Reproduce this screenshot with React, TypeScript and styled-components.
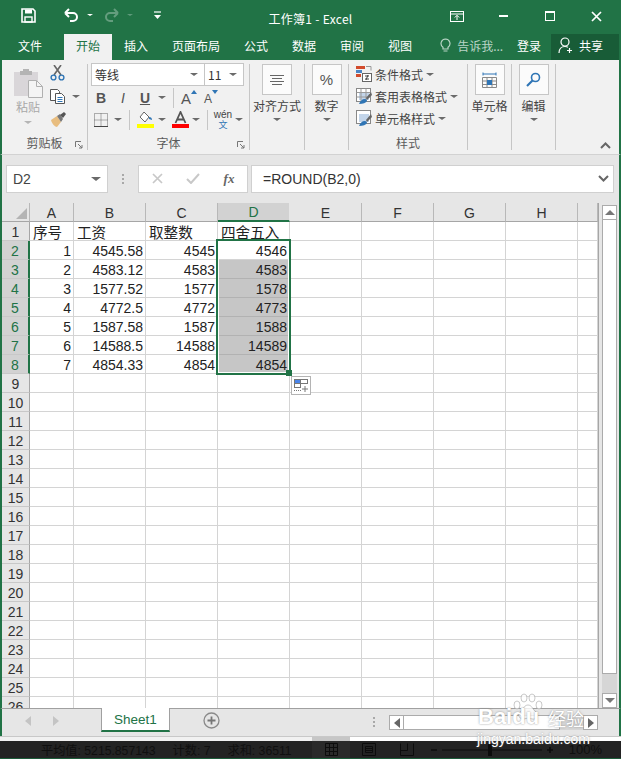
import React from "react";
import styled, { createGlobalStyle } from "styled-components";

const GREEN = "#217346";
const LINE = "#c6c6c6";
const GRID = "#d4d4d4";
const SANS = `"Liberation Sans", "Noto Sans CJK SC", sans-serif`;
const CJK = `"Noto Sans CJK SC", "Liberation Sans", sans-serif`;

const Global = createGlobalStyle`
  html, body { margin: 0; padding: 0; background: #e6e6e6; }
  * { box-sizing: border-box; }
`;

const Window = styled.div`
  position: relative;
  width: 621px;
  height: 759px;
  overflow: hidden;
  display: flex;
  flex-direction: column;
  background: #e6e6e6;
  font-family: ${CJK};
  font-size: 12px;
  color: #444;
`;

/* title bar */
const TitleBar = styled.header`
  height: 34px;
  flex: none;
  display: grid;
  grid-template-columns: 1fr auto 1fr;
  align-items: center;
  background: ${GREEN};
  color: #fff;
`;
const QuickAccess = styled.div`
  display: flex;
  align-items: center;
  padding-left: 21px;
  margin-top: -4px;
`;
const Slot = styled.span<{ $w: number; $ml?: number }>`
  width: ${(p) => p.$w}px;
  margin-left: ${(p) => p.$ml || 0}px;
  flex: none;
  display: inline-flex;
  align-items: center;
  justify-content: center;
`;
const TitleText = styled.div`
  font-size: 12px;
  margin-top: 2px;
  letter-spacing: 0.3px;
`;
const WindowButtons = styled.div`
  display: flex;
  align-items: center;
  justify-content: flex-end;
  padding-right: 19px;
  margin-top: -2px;
`;
const Caret = styled.i<{ $c?: string; $s?: number }>`
  display: inline-block;
  width: 0;
  height: 0;
  border-style: solid;
  border-width: ${(p) => p.$s || 3}px ${(p) => (p.$s || 3) + 1}px 0;
  border-color: ${(p) => p.$c || "#6a6a6a"} transparent transparent;
`;

/* tabs */
const TabRow = styled.nav`
  height: 26px;
  flex: none;
  display: flex;
  align-items: stretch;
  padding-left: 6px;
  background: ${GREEN};
  color: #fff;
`;
const Tab = styled.div<{ $active?: boolean; $mr?: number }>`
  padding: 0 12px 3px;
  display: flex;
  align-items: center;
  margin-right: ${(p) => p.$mr || 0}px;
  background: ${(p) => (p.$active ? "#f1f1f1" : "transparent")};
  color: ${(p) => (p.$active ? GREEN : "#fff")};
`;
const TellMe = styled.div`
  display: flex;
  align-items: center;
  gap: 6px;
  margin-left: 16px;
  padding-bottom: 3px;
  color: #b9d5c6;
`;
const Login = styled.div`
  display: flex;
  align-items: center;
  margin-left: auto;
  margin-right: 10px;
  padding-bottom: 3px;
`;
const Share = styled.div`
  width: 68px;
  display: flex;
  align-items: center;
  gap: 6px;
  padding: 0 0 3px 7px;
  margin-right: 2px;
  background: #185c37;
`;

/* ribbon */
const Ribbon = styled.section`
  position: relative;
  height: 95px;
  flex: none;
  display: flex;
  padding: 4px 0;
  background: #f1f1f1;
  border-bottom: 1px solid #d2d2d2;
  border-left: 2px solid ${GREEN};
  border-right: 2px solid ${GREEN};
`;
const Group = styled.div<{ $w: number }>`
  position: relative;
  width: ${(p) => p.$w}px;
  flex: none;
  display: flex;
  flex-direction: column;
  border-right: 1px solid ${LINE};
`;
const GroupBody = styled.div<{ $center?: boolean }>`
  flex: 1;
  min-height: 0;
  display: flex;
  flex-direction: column;
  align-items: ${(p) => (p.$center ? "center" : "stretch")};
`;
const GroupLabel = styled.div`
  height: 14px;
  flex: none;
  text-align: center;
  line-height: 14px;
  color: #5a5a5a;
`;
const Launcher = styled.svg`
  position: absolute;
  right: 4px;
  bottom: 1px;
`;
const ClipBody = styled.div`
  flex: 1;
  display: flex;
  padding-left: 12px;
`;
const PasteCol = styled.div`
  width: 28px;
  display: flex;
  flex-direction: column;
  align-items: center;
  padding-top: 4px;
  color: #a8a8a8;
`;
const PasteText = styled.span`
  margin-top: 2px;
  line-height: 14px;
  white-space: nowrap;
`;
const PasteCaret = styled.span`
  margin-top: 7px;
  display: flex;
`;
const SmallCol = styled.div`
  margin-left: 8px;
  display: flex;
  flex-direction: column;
  gap: 8px;
  padding-top: 1px;
`;
const SmallRow = styled.div`
  display: flex;
  align-items: center;
  gap: 6px;
`;
const SelectRow = styled.div`
  display: flex;
  margin: -1px 0 0 3px;
`;
const SelectBox = styled.div<{ $w: number }>`
  width: ${(p) => p.$w}px;
  height: 23px;
  display: flex;
  align-items: center;
  justify-content: space-between;
  padding: 0 6px 0 3px;
  background: #fff;
  border: 1px solid ${LINE};
  color: #333;
  & + & {
    margin-left: -1px;
  }
`;
const ToolRow = styled.div`
  height: 21px;
  margin-top: 1px;
  padding-left: 2px;
  display: flex;
  align-items: center;
`;
const Bold = styled.span<{ $i?: boolean; $u?: boolean }>`
  font-family: ${SANS};
  font-size: 14px;
  font-weight: ${(p) => (p.$i ? 400 : 700)};
  font-style: ${(p) => (p.$i ? "italic" : "normal")};
  text-decoration: ${(p) => (p.$u ? "underline" : "none")};
  color: #555;
`;
const GrowLetter = styled.span<{ $size: number }>`
  font-family: ${SANS};
  font-size: ${(p) => p.$size}px;
  line-height: 16px;
  margin-top: 3px;
  color: #555;
`;
const GrowMark = styled.span`
  align-self: flex-start;
  margin: 2px 0 0 0;
  display: flex;
`;
const Sep = styled.span<{ $l: number; $r: number }>`
  width: 1px;
  height: 20px;
  flex: none;
  margin: 0 ${(p) => p.$r}px 0 ${(p) => p.$l}px;
  background: ${LINE};
`;
const Dialect = styled.span`
  display: flex;
  flex-direction: column;
  align-items: center;
  line-height: 9px;
  font-family: ${SANS};
  font-size: 10px;
  color: #444;
`;
const DialectZh = styled.span`
  font-family: ${CJK};
  font-size: 9px;
  line-height: 10px;
  margin-top: 1px;
  color: #2f75b5;
`;
const BigBtn = styled.div`
  width: 30px;
  height: 31px;
  flex: none;
  display: flex;
  align-items: center;
  justify-content: center;
  background: #fbfbfb;
  border: 1px solid ${LINE};
`;
const BigLabel = styled.div`
  margin-top: 4px;
  line-height: 14px;
  white-space: nowrap;
`;
const BigCaret = styled.div`
  margin-top: 5px;
  display: flex;
`;
const StyleList = styled.div`
  margin-top: -1px;
`;
const StyleRow = styled.div`
  height: 22px;
  padding-left: 7px;
  display: flex;
  align-items: center;
  gap: 3px;
  white-space: nowrap;
`;
const Collapse = styled.svg`
  position: absolute;
  right: 8px;
  bottom: 5px;
`;

/* formula bar */
const FormulaBar = styled.div`
  height: 48px;
  flex: none;
  display: flex;
  align-items: center;
  padding: 0 5px 1px 4px;
  border-left: 2px solid ${GREEN};
  border-right: 2px solid ${GREEN};
  font-family: ${SANS};
  font-size: 14px;
`;
const NameBox = styled.div`
  width: 102px;
  height: 28px;
  display: flex;
  align-items: center;
  justify-content: space-between;
  padding: 0 6px;
  background: #fff;
  border: 1px solid #d0d0d0;
`;
const GripDots = styled.div`
  width: 30px;
  display: flex;
  justify-content: center;
`;
const FuncBox = styled.div`
  width: 110px;
  height: 28px;
  display: flex;
  align-items: center;
  padding-left: 10px;
  background: #fff;
  border: 1px solid #d0d0d0;
`;
const FxText = styled.span`
  font-family: "Liberation Serif", serif;
  font-style: italic;
  font-weight: 700;
  font-size: 13px;
  color: #666;
`;
const FormulaInput = styled.div`
  flex: 1;
  height: 28px;
  margin-left: 3px;
  display: flex;
  align-items: center;
  justify-content: space-between;
  padding: 0 4px 0 11px;
  background: #fff;
  border: 1px solid #d0d0d0;
  color: #333;
`;

/* sheet */
const SheetArea = styled.div`
  height: 505px;
  flex: none;
  display: flex;
  border-left: 2px solid ${GREEN};
  border-right: 2px solid ${GREEN};
`;
const Sheet = styled.div`
  position: relative;
  width: 597px;
  flex: none;
  overflow: hidden;
  border-right: 1px solid #a6a6a6;
  display: grid;
  grid-template-columns: 28px 44px repeat(7, 72px) 1fr;
  grid-auto-rows: 19px;
  background: #fff;
`;
const ColHead = styled.div<{ $sel?: boolean }>`
  display: flex;
  align-items: center;
  justify-content: center;
  padding-top: 1px;
  background: ${(p) => (p.$sel ? "#d2d2d2" : "#e6e6e6")};
  color: ${(p) => (p.$sel ? GREEN : "#333")};
  border-right: 1px solid ${(p) => (p.$sel ? "#e6e6e6" : "#b8b8b8")};
  border-bottom: ${(p) => (p.$sel ? `2px solid ${GREEN}` : "1px solid #a6a6a6")};
  font-family: ${SANS};
  font-size: 14px;
`;
const RowHead = styled.div<{ $sel?: boolean }>`
  display: flex;
  align-items: center;
  justify-content: center;
  padding-top: 1px;
  background: ${(p) => (p.$sel ? "#d2d2d2" : "#e6e6e6")};
  color: ${(p) => (p.$sel ? GREEN : "#333")};
  border-right: ${(p) => (p.$sel ? `2px solid ${GREEN}` : "1px solid #a6a6a6")};
  border-bottom: 1px solid #c8c8c8;
  font-family: ${SANS};
  font-size: 14px;
`;
const Cell = styled.div<{ $sel?: boolean; $text?: boolean }>`
  display: flex;
  align-items: center;
  justify-content: ${(p) => (p.$text ? "flex-start" : "flex-end")};
  padding: ${(p) => (p.$text ? "0 0 0 3px" : "1px 2px 0 0")};
  background: ${(p) => (p.$sel ? "#c6c6c6" : "#fff")};
  border-right: 1px solid ${GRID};
  border-bottom: 1px solid ${(p) => (p.$sel ? "#b2b2b2" : GRID)};
  font-family: ${(p) => (p.$text ? CJK : SANS)};
  font-size: ${(p) => (p.$text ? 14.6 : 14)}px;
  color: #222;
  white-space: nowrap;
  overflow: hidden;
`;
const Selection = styled.div`
  position: absolute;
  left: 214px;
  top: 36px;
  width: 75px;
  height: 136px;
  border: 2px solid ${GREEN};
  box-shadow: inset 0 0 0 1px #fff;
  pointer-events: none;
`;
const FillHandle = styled.div`
  position: absolute;
  right: -3px;
  bottom: -3px;
  width: 6px;
  height: 6px;
  background: ${GREEN};
`;
const QuickAnalysis = styled.div`
  position: absolute;
  left: 289px;
  top: 173px;
  width: 20px;
  height: 19px;
  display: flex;
  align-items: center;
  justify-content: center;
  background: #fff;
  border: 1px solid #b4b4b4;
`;

/* scrollbars */
const VScroll = styled.div`
  flex: 1;
  display: flex;
  flex-direction: column;
  padding: 2px 2px 0 3px;
`;
const ScrollBtn = styled.div<{ $w?: number }>`
  width: ${(p) => (p.$w ? `${p.$w}px` : "100%")};
  height: ${(p) => (p.$w ? "100%" : "15px")};
  flex: none;
  display: flex;
  align-items: center;
  justify-content: center;
  background: #fff;
  border: 1px solid #ababab;
`;
const VThumb = styled.div`
  height: 455px;
  flex: none;
  margin-top: -1px;
  background: #fff;
  border: 1px solid #ababab;
`;
const VTrack = styled.div`
  flex: 1;
  background: #d6d6d6;
`;

/* sheet tabs */
const TabBar = styled.div`
  height: 28px;
  flex: none;
  display: flex;
  border-top: 1px solid #a0a0a0;
  border-left: 2px solid ${GREEN};
  border-right: 2px solid ${GREEN};
`;
const TabNav = styled.div`
  width: 99px;
  display: flex;
  align-items: center;
  padding-bottom: 3px;
  padding-left: 23px;
  gap: 22px;
`;
const SheetTab = styled.div`
  width: 69px;
  height: 24px;
  margin-top: -1px;
  display: flex;
  align-items: center;
  justify-content: center;
  background: #fff;
  border-left: 1px solid #a0a0a0;
  border-right: 1px solid #a0a0a0;
  border-bottom: 2px solid ${GREEN};
  color: ${GREEN};
  font-family: ${SANS};
  font-size: 13.5px;
  padding-top: 1px;
`;
const AddSheet = styled.div`
  margin: 3px 0 0 33px;
  height: 17px;
  display: flex;
`;
const HDots = styled.div`
  width: 169px;
  padding: 2px 14px 0 0;
  display: flex;
  align-items: center;
  justify-content: flex-end;
  height: 24px;
`;
const HScroll = styled.div`
  width: 209px;
  height: 15px;
  margin-top: 6px;
  display: flex;
  background: #d6d6d6;
`;
const HThumb = styled.div`
  width: 157px;
  margin-left: -1px;
  height: 100%;
  background: #fff;
  border: 1px solid #ababab;
`;
const HTrack = styled.div`
  flex: 1;
`;

/* status bar */
const StatusBar = styled.footer`
  height: 23px;
  flex: none;
  display: flex;
  border-top: 1px solid #c8c8c8;
  border-bottom: 1px solid #1d5c3a;
`;
const StatusCell = styled.div<{ $w?: number; $strip: string; $bg: string }>`
  width: ${(p) => (p.$w ? `${p.$w}px` : "auto")};
  flex: ${(p) => (p.$w ? "none" : 1)};
  display: flex;
  align-items: center;
  border-top: 4px solid ${(p) => p.$strip};
  background: ${(p) => p.$bg};
  color: #0f0f0f;
  white-space: nowrap;
`;
const StatusText = styled.span<{ $ml: number }>`
  margin-left: ${(p) => p.$ml}px;
  font-family: ${SANS};
  font-size: 12.2px;
`;
const Zoom = styled.span`
  font-family: ${SANS};
  font-size: 13px;
  margin-left: auto;
  margin-right: 19px;
`;

/* baidu mark laid over the picture */
const Watermark = styled.div`
  position: absolute;
  left: 478px;
  top: 690px;
  width: 112px;
  height: 60px;
  color: #fff;
  text-shadow: 0 0 2px rgba(110, 110, 110, 0.75);
  pointer-events: none;
`;
const MarkText = styled.div`
  position: absolute;
  left: 0;
  top: 16px;
  font-family: ${SANS};
  font-weight: 700;
  font-size: 22px;
  line-height: 22px;
`;
const MarkZh = styled.div`
  position: absolute;
  left: 70px;
  top: 18px;
  font-family: ${CJK};
  font-size: 18px;
  line-height: 20px;
  white-space: nowrap;
`;
const MarkUrl = styled.div`
  position: absolute;
  left: -1px;
  top: 41px;
  font-family: ${SANS};
  font-size: 14px;
  line-height: 16px;
  white-space: nowrap;
`;
const MarkPaw = styled.svg`
  position: absolute;
  left: 35px;
  top: 3px;
`;

const W = "#fff";
const Save = () => (
  <svg width="15" height="15" viewBox="0 0 15 15">
    <path d="M1 1h11l2 2v11H1z" fill="none" stroke={W} strokeWidth="1.6" />
    <rect x="4" y="1.5" width="7" height="4" fill={W} />
    <rect x="4" y="9" width="7" height="5" fill="none" stroke={W} strokeWidth="1.4" />
  </svg>
);
const Undo = ({ c, o }: { c: string; o?: number }) => (
  <svg width="15" height="14" viewBox="0 0 15 14" opacity={o || 1}>
    <path d="M1 5h8a4 4 0 0 1 0 8H6M1 5l4-4M1 5l4 4" fill="none" stroke={c} strokeWidth="2" />
  </svg>
);
const Redo = () => (
  <svg width="15" height="14" viewBox="0 0 15 14" opacity="0.3">
    <path d="M14 5H6a4 4 0 0 0 0 8h3M14 5l-4-4M14 5l-4 4" fill="none" stroke="#fff" strokeWidth="2" />
  </svg>
);
const Customize = () => (
  <svg width="9" height="9" viewBox="0 0 9 9">
    <path d="M1 1h7" stroke={W} strokeWidth="1.2" />
    <path d="M1 4h7L4.5 8z" fill={W} />
  </svg>
);
const RibbonDisplay = () => (
  <svg width="14" height="11" viewBox="0 0 14 11">
    <rect x="0.5" y="0.5" width="13" height="10" fill="none" stroke={W} />
    <path d="M0 3h14" stroke={W} />
    <path d="M7 9V4.5M4.8 6.5L7 4.3l2.2 2.2" fill="none" stroke={W} />
  </svg>
);
const Bulb = () => (
  <svg width="11" height="15" viewBox="0 0 11 15">
    <path
      d="M5.5 1a4.5 4.5 0 0 0-2.5 8.2V11h5V9.2A4.5 4.5 0 0 0 5.5 1zM3.5 13h4"
      fill="none"
      stroke="#b9d5c6"
      strokeWidth="1.2"
    />
  </svg>
);
const Person = () => (
  <svg width="15" height="17" viewBox="0 0 15 17">
    <circle cx="7" cy="5" r="4" fill="none" stroke={W} strokeWidth="1.2" />
    <path d="M1 16c0-4 2.5-6.5 6-6.5 1 0 2 .2 3 .8" fill="none" stroke={W} strokeWidth="1.2" />
    <path d="M11.5 11v5M9 13.5h5" stroke={W} strokeWidth="1.2" />
  </svg>
);
const Paste = () => (
  <svg width="29" height="30" viewBox="0 0 29 30">
    <path d="M0 4h24v24H0z" fill="#d9d6d9" />
    <path d="M6 3h3V1h6v2h3v4H6z" fill="#b4b4b4" />
    <path d="M14.5 12.5h8l6 6v11h-14z" fill="#f4f4f4" stroke="#b0b0b0" />
    <path d="M22.5 12.5v6h6" fill="none" stroke="#b0b0b0" />
  </svg>
);
const Cut = () => (
  <svg width="15" height="16" viewBox="0 0 15 16">
    <path d="M4 10L11 0M11 10L4 0" stroke="#666" strokeWidth="1.6" />
    <circle cx="3.5" cy="12.5" r="2.4" fill="none" stroke="#2f75b5" strokeWidth="1.4" />
    <circle cx="11.5" cy="12.5" r="2.4" fill="none" stroke="#2f75b5" strokeWidth="1.4" />
  </svg>
);
const Copy = () => (
  <svg width="16" height="15" viewBox="0 0 16 15">
    <path d="M.5.5h7l2 2v9H.5z" fill="#fff" stroke="#555" />
    <path d="M5.5 4.5h6l3 3v7h-9z" fill="#fff" stroke="#555" />
    <path d="M7.5 8.5h5M7.5 10.5h5M7.5 12.5h5" stroke="#2f75b5" />
  </svg>
);
const Painter = () => (
  <svg width="17" height="16" viewBox="0 0 17 16">
    <path d="M1 8l6-4 4 6-4 5c-2 0-5-3-6-7z" fill="#e8bd7f" />
    <path d="M7 4l3-2 3 5-2 3z" fill="#777" />
    <path d="M10 3l4-3 2 2-3 4z" fill="#555" />
  </svg>
);
const LaunchIcon = () => (
  <Launcher width="8" height="8" viewBox="0 0 8 8">
    <path d="M.5 6V.5H6" fill="none" stroke="#777" />
    <path d="M3 3l4 4M7 4v3H4" fill="none" stroke="#777" />
  </Launcher>
);
const SizeArrow = ({ up }: { up: boolean }) => (
  <svg width="6" height="4" viewBox="0 0 6 4">
    <polygon points={up ? "0,4 6,4 3,0" : "0,0 6,0 3,4"} fill="#2f75b5" />
  </svg>
);
const Borders = () => (
  <svg width="14" height="14" viewBox="0 0 14 14">
    <path d="M.5.5h13v13H.5zM7 .5v13M.5 7h13" fill="none" stroke="#666" strokeDasharray="1 1" />
    <path d="M0 13.5h14" stroke="#444" />
  </svg>
);
const FillColor = () => (
  <svg width="17" height="17" viewBox="0 0 17 17">
    <path d="M7 1l5 5-4 5-5-5z" fill="#fff" stroke="#666" />
    <path d="M12 6c2 0 3 1 3 3l-3-1z" fill="#2f75b5" />
    <rect x="0" y="13" width="17" height="4" fill="#ff0" />
  </svg>
);
const FontColor = () => (
  <svg width="17" height="17" viewBox="0 0 17 17">
    <path d="M3.5 12L8.5 1l5 11M5.5 8.5h6" fill="none" stroke="#555" strokeWidth="1.8" />
    <rect x="0" y="13" width="17" height="4" fill="#f00" />
  </svg>
);
const AlignIcon = () => (
  <svg width="14" height="10" viewBox="0 0 14 10">
    <path d="M0 .5h14M2 3.5h10M0 6.5h14M2 9.5h10" stroke="#666" />
  </svg>
);
const Percent = styled.span`
  font-family: ${SANS};
  font-size: 15px;
  color: #555;
`;
const CellsIcon = () => (
  <svg width="15" height="16" viewBox="0 0 15 16">
    <path d="M1 .5v3M14 .5v3M1 2h13" stroke="#2f75b5" />
    <path d="M.5 5.5h14v10H.5zM5 5.5v10M10 5.5v10M.5 9h14M.5 12.5h14" fill="none" stroke="#888" />
    <rect x="5" y="8" width="5" height="5" fill="#2f75b5" />
  </svg>
);
const Search = () => (
  <svg width="15" height="15" viewBox="0 0 15 15">
    <circle cx="9.5" cy="5.5" r="4" fill="none" stroke="#2f75b5" strokeWidth="1.6" />
    <path d="M6.5 8.5L1 14" stroke="#2f75b5" strokeWidth="2.2" />
  </svg>
);
const CondIcon = () => (
  <svg width="16" height="16" viewBox="0 0 16 16">
    <path d="M0 0h9v3H0z" fill="#d24b2c" />
    <path d="M0 4h6v3H0z" fill="#4a84c4" />
    <path d="M0 8h5v3H0z" fill="#d24b2c" />
    <path d="M10 .5h5v4" fill="none" stroke="#999" />
    <rect x="6.5" y="7.5" width="9" height="8" fill="#fff" stroke="#666" />
    <path d="M9 10h4M9 13h4M12 9l-2 5" stroke="#444" />
  </svg>
);
const TableIcon = ({ grid }: { grid: boolean }) => (
  <svg width="16" height="17" viewBox="0 0 16 17">
    <rect x=".5" y=".5" width="14" height="13" fill="#fff" stroke="#888" />
    <rect x="3" y="4" width="10" height="8" fill="#c3d5ea" />
    {grid && <path d="M5 .5v13M10 .5v13M.5 4.5h14M.5 9h14" stroke="#999" />}
    <path d="M15 4L10 10l1 2 5-5z" fill="#666" />
    <path d="M3 16c1-3 3-5 6-5 1 0 2 1 2 2-1 2-4 3-8 3z" fill="#2f75b5" />
  </svg>
);
const X = ({ c }: { c: string }) => (
  <svg width="11" height="11" viewBox="0 0 11 11">
    <path d="M1 1l9 9M10 1l-9 9" stroke={c} strokeWidth="1.7" />
  </svg>
);
const Check = () => (
  <svg width="14" height="11" viewBox="0 0 14 11">
    <path d="M1 6l4 4 8-9" fill="none" stroke="#c8c8c8" strokeWidth="2" />
  </svg>
);
const Grip = ({ h = 10, c = "#a8a8a8" }: { h?: number; c?: string }) => (
  <svg width="2" height={h} viewBox={`0 0 2 ${h}`}>
    <path d={`M1 0V${h}`} stroke={c} strokeWidth="2" strokeDasharray="2 2" />
  </svg>
);
const Chevron = () => (
  <svg width="11" height="7" viewBox="0 0 11 7">
    <path d="M1 1l4.5 4.5L10 1" fill="none" stroke="#666" strokeWidth="2" />
  </svg>
);
const Tri = ({ dir, c }: { dir: "l" | "r" | "u" | "d"; c: string }) => {
  const pts = { l: "6,0 6,10 0,5", r: "0,0 0,10 6,5", u: "0,5 10,5 5,0", d: "0,0 10,0 5,5" };
  const h = dir === "u" || dir === "d";
  return (
    <svg width={h ? 10 : 6} height={h ? 5 : 10}>
      <polygon points={pts[dir]} fill={c} />
    </svg>
  );
};
const Corner = () => (
  <svg width="27" height="18" viewBox="0 0 27 18">
    <polygon points="25,4 25,15 14,15" fill="#b4b4b4" />
  </svg>
);
const PlusCircle = () => (
  <svg width="17" height="17" viewBox="0 0 17 17">
    <circle cx="8.5" cy="8.5" r="7.5" fill="none" stroke="#8a8a8a" strokeWidth="1.3" />
    <path d="M8.5 4.5v8M4.5 8.5h8" stroke="#777" strokeWidth="1.8" />
  </svg>
);
const Analysis = () => (
  <svg width="15" height="13" viewBox="0 0 15 13">
    <rect x=".5" y=".5" width="6" height="4" fill="#4a84e8" stroke="#777" />
    <rect x="6.5" y=".5" width="7" height="4" fill="#fff" stroke="#777" />
    <rect x=".5" y="4.5" width="6" height="4" fill="#fff" stroke="#777" />
    <path d="M0 11.5h7" stroke="#777" strokeDasharray="1 1" />
    <path d="M11 7v6M8 10h6" stroke="#777" />
  </svg>
);
const ViewNormal = () => (
  <svg width="13" height="13" viewBox="0 0 13 13">
    <path d="M.5.5h12v12H.5zM4.5.5v12M8.5.5v12M.5 4.5h12M.5 8.5h12" fill="none" stroke="#0c0c0c" />
  </svg>
);
const ViewLayout = () => (
  <svg width="14" height="13" viewBox="0 0 14 13">
    <path d="M.5.5h13v12H.5zM3.5 3.5h7v6h-7z" fill="none" stroke="#0c0c0c" />
    <path d="M4 5.5h6M4 7.5h6" stroke="#0c0c0c" />
  </svg>
);
const ViewBreak = () => (
  <svg width="14" height="13" viewBox="0 0 14 13">
    <path d="M.5.5v12h13V.5M.5 7.5h7V.5" fill="none" stroke="#0c0c0c" />
  </svg>
);
const ZoomSlider = () => (
  <svg width="122" height="14" viewBox="0 0 122 14">
    <path d="M0 7h6M116 7h6M119 4v6" stroke="#0c0c0c" strokeWidth="1.6" />
    <path d="M11 7h100" stroke="#0c0c0c" />
    <rect x="57" y="1" width="4" height="12" fill="#0c0c0c" />
  </svg>
);
const Paw = () => (
  <MarkPaw width="30" height="30" viewBox="0 0 30 30">
    <g fill="rgba(255,255,255,.8)" stroke="rgba(130,130,130,.55)" strokeWidth="0.8">
      <ellipse cx="4" cy="12" rx="3" ry="4" />
      <ellipse cx="11" cy="5" rx="3" ry="4" />
      <ellipse cx="19" cy="5" rx="3" ry="4" />
      <ellipse cx="26" cy="12" rx="3" ry="4" />
      <path d="M15 12c-4 0-5 5-8 7-3 3 0 8 4 7 3-1 5-1 8 0 4 1 7-4 4-7-3-2-4-7-8-7z" />
    </g>
  </MarkPaw>
);

const TOP_TABS = ["插入", "页面布局", "公式", "数据", "审阅", "视图"];
const COLUMNS = ["A", "B", "C", "D", "E", "F", "G", "H", "I"];
const HEADINGS = ["序号", "工资", "取整数", "四舍五入"];
const VALUES = [
  ["1", "4545.58", "4545", "4546"],
  ["2", "4583.12", "4583", "4583"],
  ["3", "1577.52", "1577", "1578"],
  ["4", "4772.5", "4772", "4773"],
  ["5", "1587.58", "1587", "1588"],
  ["6", "14588.5", "14588", "14589"],
  ["7", "4854.33", "4854", "4854"],
];
const ROW_COUNT = 26;

const BigControl = ({ w, icon, label }: { w: number; icon: React.ReactNode; label: string }) => (
  <Group $w={w}>
    <GroupBody $center>
      <BigBtn>{icon}</BigBtn>
      <BigLabel>{label}</BigLabel>
      <BigCaret>
        <Caret />
      </BigCaret>
    </GroupBody>
  </Group>
);

const Rows = () => {
  const rows = [];
  for (let r = 1; r <= ROW_COUNT; r++) {
    const data = r === 1 ? HEADINGS : VALUES[r - 2] || [];
    const sel = r >= 2 && r <= 8;
    rows.push(
      <React.Fragment key={r}>
        <RowHead $sel={sel}>{r}</RowHead>
        {COLUMNS.map((c, i) => (
          <Cell key={c} $text={r === 1} $sel={c === "D" && r > 2 && r <= 8}>
            {data[i]}
          </Cell>
        ))}
      </React.Fragment>
    );
  }
  return <>{rows}</>;
};

export default function App() {
  return (
    <Window>
      <Global />
      <TitleBar>
        <QuickAccess>
          <Save />
          <Slot $w={15} $ml={28}>
            <Undo c={W} />
          </Slot>
          <Slot $w={9} $ml={6}>
            <Caret $c="#fff" $s={2} />
          </Slot>
          <Slot $w={15} $ml={10}>
            <Redo />
          </Slot>
          <Slot $w={9} $ml={6}>
            <Caret $c="#5f9a7b" $s={2} />
          </Slot>
          <Slot $w={9} $ml={19}>
            <Customize />
          </Slot>
        </QuickAccess>
        <TitleText>工作簿1 - Excel</TitleText>
        <WindowButtons>
          <RibbonDisplay />
          <Slot $w={9} $ml={35}>
            <svg width="9" height="2">
              <rect width="9" height="2" fill={W} />
            </svg>
          </Slot>
          <Slot $w={10} $ml={37}>
            <svg width="10" height="10">
              <rect x=".5" y=".5" width="9" height="9" fill="none" stroke={W} />
              <rect width="10" height="2" fill={W} />
            </svg>
          </Slot>
          <Slot $w={11} $ml={36}>
            <X c={W} />
          </Slot>
        </WindowButtons>
      </TitleBar>

      <TabRow>
        <Tab $mr={10}>文件</Tab>
        <Tab $active>开始</Tab>
        {TOP_TABS.map((t) => (
          <Tab key={t}>{t}</Tab>
        ))}
        <TellMe>
          <Bulb />
          告诉我...
        </TellMe>
        <Login>登录</Login>
        <Share>
          <Person />
          共享
        </Share>
      </TabRow>

      <Ribbon>
        <Group $w={86}>
          <ClipBody>
            <PasteCol>
              <Paste />
              <PasteText>粘贴</PasteText>
              <PasteCaret>
                <Caret $c="#b5b5b5" />
              </PasteCaret>
            </PasteCol>
            <SmallCol>
              <Cut />
              <SmallRow>
                <Copy />
                <Caret />
              </SmallRow>
              <Painter />
            </SmallCol>
          </ClipBody>
          <GroupLabel>剪贴板</GroupLabel>
          <LaunchIcon />
        </Group>

        <Group $w={162}>
          <GroupBody>
            <SelectRow>
              <SelectBox $w={114}>
                等线
                <Caret />
              </SelectBox>
              <SelectBox $w={40}>
                11
                <Caret />
              </SelectBox>
            </SelectRow>
            <ToolRow>
              <Slot $w={22}>
                <Bold>B</Bold>
              </Slot>
              <Slot $w={22}>
                <Bold $i>I</Bold>
              </Slot>
              <Slot $w={22}>
                <Bold $u>U</Bold>
              </Slot>
              <Slot $w={12}>
                <Caret />
              </Slot>
              <Sep $l={5} $r={4} />
              <Slot $w={22}>
                <GrowLetter $size={15}>A</GrowLetter>
                <GrowMark>
                  <SizeArrow up />
                </GrowMark>
              </Slot>
              <Slot $w={22}>
                <GrowLetter $size={12}>A</GrowLetter>
                <GrowMark>
                  <SizeArrow up={false} />
                </GrowMark>
              </Slot>
            </ToolRow>
            <ToolRow>
              <Slot $w={22}>
                <Borders />
              </Slot>
              <Slot $w={12}>
                <Caret />
              </Slot>
              <Sep $l={5} $r={7} />
              <FillColor />
              <Slot $w={16}>
                <Caret />
              </Slot>
              <Slot $w={20}>
                <FontColor />
              </Slot>
              <Slot $w={12}>
                <Caret />
              </Slot>
              <Sep $l={5} $r={5} />
              <Slot $w={20}>
                <Dialect>
                  wén
                  <DialectZh>文</DialectZh>
                </Dialect>
              </Slot>
              <Slot $w={12}>
                <Caret />
              </Slot>
            </ToolRow>
          </GroupBody>
          <GroupLabel>字体</GroupLabel>
          <LaunchIcon />
        </Group>

        <BigControl w={55} icon={<AlignIcon />} label="对齐方式" />
        <BigControl w={44} icon={<Percent>%</Percent>} label="数字" />

        <Group $w={119}>
          <GroupBody>
            <StyleList>
              <StyleRow>
                <CondIcon />
                条件格式
                <Caret />
              </StyleRow>
              <StyleRow>
                <TableIcon grid />
                套用表格格式
                <Caret />
              </StyleRow>
              <StyleRow>
                <TableIcon grid={false} />
                单元格样式
                <Caret />
              </StyleRow>
            </StyleList>
          </GroupBody>
          <GroupLabel>样式</GroupLabel>
        </Group>

        <BigControl w={44} icon={<CellsIcon />} label="单元格" />
        <BigControl w={44} icon={<Search />} label="编辑" />
        <Collapse width="11" height="7" viewBox="0 0 11 7">
          <path d="M1 6l4.5-4.5L10 6" fill="none" stroke="#666" strokeWidth="2" />
        </Collapse>
      </Ribbon>

      <FormulaBar>
        <NameBox>
          D2
          <Caret $s={4} />
        </NameBox>
        <GripDots>
          <Grip />
        </GripDots>
        <FuncBox>
          <Slot $w={16}>
            <X c="#c8c8c8" />
          </Slot>
          <Slot $w={16} $ml={20}>
            <Check />
          </Slot>
          <Slot $w={16} $ml={20}>
            <FxText>fx</FxText>
          </Slot>
        </FuncBox>
        <FormulaInput>
          =ROUND(B2,0)
          <Chevron />
        </FormulaInput>
      </FormulaBar>

      <SheetArea>
        <Sheet>
          <ColHead>
            <Corner />
          </ColHead>
          {COLUMNS.map((c) => (
            <ColHead key={c} $sel={c === "D"}>
              {c === "I" ? "" : c}
            </ColHead>
          ))}
          <Rows />
          <Selection>
            <FillHandle />
          </Selection>
          <QuickAnalysis>
            <Analysis />
          </QuickAnalysis>
        </Sheet>
        <VScroll>
          <ScrollBtn>
            <Tri dir="u" c="#777" />
          </ScrollBtn>
          <VThumb />
          <VTrack />
          <ScrollBtn>
            <Tri dir="d" c="#777" />
          </ScrollBtn>
        </VScroll>
      </SheetArea>

      <TabBar>
        <TabNav>
          <Tri dir="l" c="#c4c4c4" />
          <Tri dir="r" c="#c4c4c4" />
        </TabNav>
        <SheetTab>Sheet1</SheetTab>
        <AddSheet>
          <PlusCircle />
        </AddSheet>
        <HDots>
          <Grip />
        </HDots>
        <HScroll>
          <ScrollBtn $w={15}>
            <Tri dir="l" c="#666" />
          </ScrollBtn>
          <HThumb />
          <HTrack />
          <ScrollBtn $w={15}>
            <Tri dir="r" c="#666" />
          </ScrollBtn>
        </HScroll>
      </TabBar>

      <StatusBar>
        <StatusCell $w={312} $strip="#f1f1f1" $bg="#232323">
          <StatusText $ml={41}>平均值: 5215.857143</StatusText>
          <StatusText $ml={17}>计数: 7</StatusText>
          <StatusText $ml={17}>求和: 36511</StatusText>
        </StatusCell>
        <StatusCell $w={38} $strip="#c6c6c6" $bg="#2a2a2a">
          <Slot $w={38}>
            <ViewNormal />
          </Slot>
        </StatusCell>
        <StatusCell $strip="#fff" $bg="#232323">
          <Slot $w={14} $ml={12}>
            <ViewLayout />
          </Slot>
          <Slot $w={14} $ml={24}>
            <ViewBreak />
          </Slot>
          <Slot $w={122} $ml={17}>
            <ZoomSlider />
          </Slot>
          <Zoom>100%</Zoom>
        </StatusCell>
      </StatusBar>

      <Watermark>
        <Paw />
        <MarkText>Baidu</MarkText>
        <MarkZh>经验</MarkZh>
        <MarkUrl>jingyan.baidu.com</MarkUrl>
      </Watermark>
    </Window>
  );
}
